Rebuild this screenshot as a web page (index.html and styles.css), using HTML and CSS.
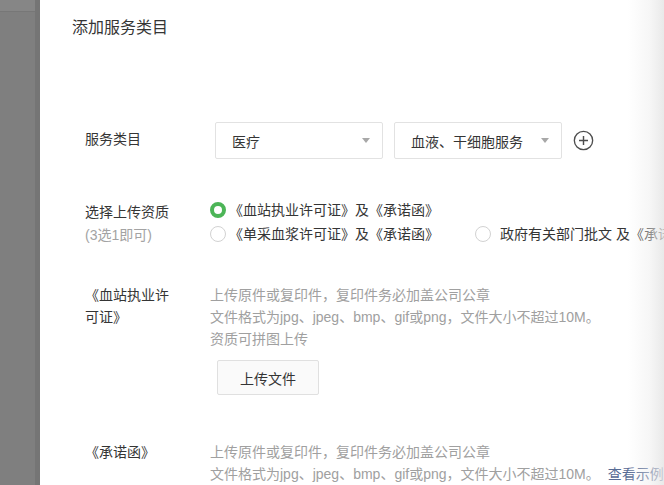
FILE: index.html
```html
<!DOCTYPE html>
<html lang="zh-CN">
<head>
<meta charset="utf-8">
<title>添加服务类目</title>
<link rel="stylesheet" href="styles.css">
</head>
<body>
<div class="page">
  <div class="backdrop">
    <div class="backdrop-top"></div>
    <div class="backdrop-edge"></div>
  </div>
  <div class="dialog">
    <h1 class="title">添加服务类目</h1>

    <div class="row row-category">
      <div class="label">服务类目</div>
      <div class="field selects">
        <div class="select"><span>医疗</span><i class="arrow"></i></div>
        <div class="select"><span>血液、干细胞服务</span><i class="arrow"></i></div>
        <svg class="add" width="21" height="21" viewBox="0 0 22 22">
          <circle cx="11" cy="11" r="9.6" fill="none" stroke="#4d4d4d" stroke-width="1.4"/>
          <path d="M11 6.3v9.4M6.3 11h9.4" stroke="#4d4d4d" stroke-width="1.5" fill="none"/>
        </svg>
      </div>
    </div>

    <div class="row row-radio">
      <div class="label label-two">选择上传资质<div class="sub">(3选1即可)</div></div>
      <div class="field radios">
        <div class="radio-line">
          <label class="radio checked"><i class="dot"></i><span>《血站执业许可证》及《承诺函》</span></label>
        </div>
        <div class="radio-line">
          <label class="radio"><i class="dot"></i><span>《单采血浆许可证》及《承诺函》</span></label>
          <label class="radio radio-third"><i class="dot"></i><span>政府有关部门批文 及《承诺函》</span></label>
        </div>
      </div>
    </div>

    <div class="row row-upload">
      <div class="label label-wrap">《血站执业许可证》</div>
      <div class="field">
        <p class="desc">上传原件或复印件，复印件务必加盖公司公章</p>
        <p class="desc">文件格式为jpg、jpeg、bmp、gif或png，文件大小不超过10M。</p>
        <p class="desc">资质可拼图上传</p>
        <button class="btn">上传文件</button>
      </div>
    </div>

    <div class="row row-upload row-last">
      <div class="label label-wrap">《承诺函》</div>
      <div class="field">
        <p class="desc">上传原件或复印件，复印件务必加盖公司公章</p>
        <p class="desc">文件格式为jpg、jpeg、bmp、gif或png，文件大小不超过10M。 <a class="link">查看示例</a></p>
      </div>
    </div>

    <div class="fade"></div>
  </div>
</div>
</body>
</html>
```

FILE: styles.css
```css
* { box-sizing: border-box; }
html, body {
  margin: 0;
  padding: 0;
  width: 664px;
  height: 485px;
  overflow: hidden;
  background: #7f7f7f;
}
body {
  font-family: "Liberation Sans", "Noto Sans CJK SC", sans-serif;
  font-size: 14px;
  color: #353535;
}
.page {
  display: flex;
  width: 664px;
  height: 485px;
}
.backdrop {
  width: 40px;
  flex: none;
  display: flex;
  flex-direction: column;
  position: relative;
  background: #7f7f7f;
}
.backdrop-top {
  height: 12px;
  background: #868686;
  border-bottom: 1px solid #777;
  margin-right: 5px;
}
.backdrop-edge {
  position: absolute;
  right: 0;
  top: 0;
  bottom: 0;
  width: 5px;
  background: #757575;
}
.dialog {
  flex: 1;
  background: #fff;
  position: relative;
  padding: 17px 0 0 0;
  overflow: hidden;
}
.title {
  margin: 0 0 0 32px;
  font-size: 16px;
  font-weight: normal;
  line-height: 22px;
  color: #353535;
}
.row {
  display: flex;
  padding-left: 45px;
}
.label {
  width: 125px;
  flex: none;
  line-height: 22px;
  color: #353535;
}
.row-category {
  margin-top: 83px;
  align-items: center;
}
.row-category .label { margin-top: -3px; }
.selects {
  display: flex;
  align-items: center;
  padding-left: 5px;
}
.select {
  width: 168px;
  height: 37px;
  border: 1px solid #e2e2e2;
  border-radius: 2px;
  display: flex;
  align-items: center;
  justify-content: space-between;
  padding: 0 12px 0 16px;
  margin-right: 11px;
  color: #353535;
}
.arrow {
  width: 0;
  height: 0;
  border-left: 4.5px solid transparent;
  border-right: 4.5px solid transparent;
  border-top: 5px solid #a8a8a8;
}
.add { display: block; }

.row-radio { margin-top: 39px; }
.label-two {
  padding-top: 3px;
  line-height: 23px;
}
.sub { color: #a3a3a3; }
.radios { display: flex; flex-direction: column; }
.radio-line {
  display: flex;
  height: 24px;
  align-items: center;
}
.radio {
  display: flex;
  align-items: center;
  line-height: 24px;
  white-space: nowrap;
}
.radio span { margin-left: 3px; }
.dot {
  width: 16px;
  height: 16px;
  border-radius: 50%;
  border: 1px solid #d2d2d2;
  background: #fff;
  flex: none;
}
.radio.checked .dot {
  border: 4.5px solid #4cb557;
  background: #fff;
}
.radio-third { margin-left: 36px; }
.radio-third span { margin-left: 9px; }

.row-upload { margin-top: 37px; }
.label-wrap {
  width: 125px;
  padding-right: 35px;
}
.desc {
  margin: 0;
  line-height: 22px;
  color: #a0a0a0;
  white-space: nowrap;
}
.btn {
  margin: 10px 0 0 7px;
  width: 102px;
  height: 35px;
  border: 1px solid #e0e0e0;
  border-radius: 2px;
  background: #fafafa;
  font-family: "Liberation Sans", "Noto Sans CJK SC", sans-serif;
  font-size: 14px;
  color: #353535;
  padding: 0;
}
.row-last { margin-top: 46px; }
.link { color: #576b95; margin-left: 4px; }

.fade {
  position: absolute;
  top: 0;
  right: 0;
  bottom: 0;
  width: 36px;
  background: linear-gradient(to right, rgba(240,240,240,0) 0%, rgba(236,236,236,0.45) 60%, rgba(228,228,228,0.8) 100%);
  pointer-events: none;
}
```
